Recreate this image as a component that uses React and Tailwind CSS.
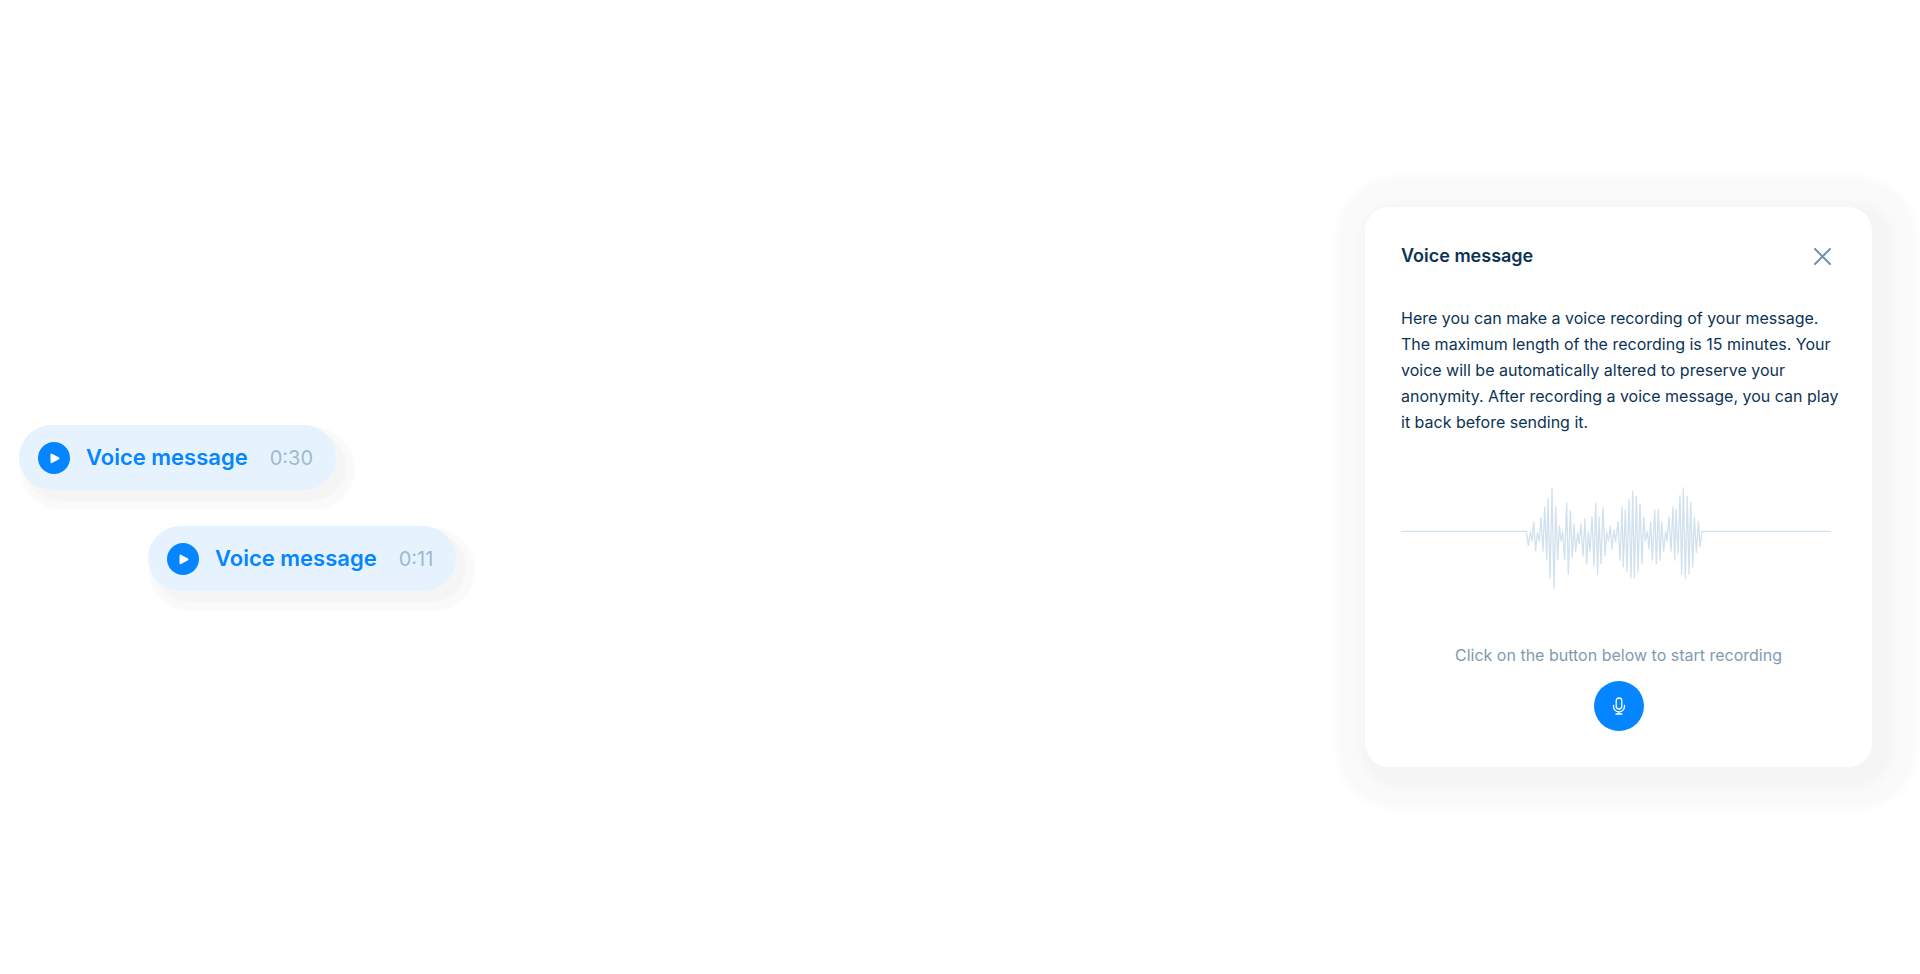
import React from 'react';

const messages = [
  { id: 1, length: '0:30', className: 'ml-[19px]' },
  { id: 2, length: '0:11', className: 'ml-[148px]' },
];

const peaks = [
  [49, 184], [55, 226], [61, 186], [66, 213], [71, 156], [77, 243], [82, 187], [88, 213], [93, 142], [99, 243],
  [104, 112], [110, 270], [114, 86], [120, 326], [126, 55], [132, 355], [137, 111], [143, 270], [148, 168], [153, 213],
  [158, 186], [164, 268], [170, 99], [175, 313], [181, 123], [187, 262], [192, 163], [197, 245], [203, 188], [207, 222],
  [213, 163], [219, 258], [225, 146], [230, 281], [235, 186], [240, 243], [246, 141], [252, 287], [257, 99], [263, 313],
  [267, 141], [273, 280], [279, 114], [285, 257], [290, 186], [295, 213], [301, 168], [306, 237], [312, 180], [317, 215],
  [324, 155], [330, 270], [336, 110], [340, 290], [346, 120], [351, 305], [357, 88], [363, 323], [368, 64], [373, 323],
  [379, 80], [384, 306], [390, 102], [396, 280], [401, 141], [406, 213], [412, 184], [417, 237], [422, 155], [427, 270],
  [434, 120], [439, 281], [445, 118], [450, 270], [455, 155], [461, 243], [467, 184], [471, 213], [477, 141], [483, 243],
  [489, 111], [494, 270], [498, 118], [504, 250], [510, 77], [515, 313], [520, 54], [526, 326], [532, 80], [537, 312],
  [542, 97], [548, 291], [553, 141], [559, 247], [565, 154], [570, 231], [576, 184],
];

function Waveform() {
  const points = peaks.map(([x, y]) => `${x + 327},${y}`).join(' ');

  return (
    <svg viewBox="0 0 1290 390" className="block w-full" fill="none" stroke="#d2e1ee" strokeWidth="4" strokeLinejoin="round" aria-hidden="true">
      <polyline points={`0,184 ${points} 1290,184`} />
    </svg>
  );
}

function VoicePill({ length, className }) {
  return (
    <button type="button" className={`flex h-[65px] w-fit items-center rounded-full bg-[#e6f3ff] pr-[23px] pl-[19px] shadow-[8px_9px_2px_2px_#f5f5f5,10px_11px_3px_9px_#fafafa] ${className}`}>
      <span className="flex size-8 items-center justify-center rounded-full bg-[#0585ff]">
        <svg viewBox="0 0 32 32" className="size-8" fill="#fff" stroke="#fff" strokeWidth="2" strokeLinejoin="round" aria-hidden="true">
          <path d="M13.5 12.6v7.6l7-3.8z" />
        </svg>
      </span>
      <span className="ml-4 text-[22px] font-semibold text-[#0585ff]">Voice message</span>
      <span className="ml-[22px] text-xl text-[#9fb9ce]">{length}</span>
    </button>
  );
}

export default function App() {
  return (
    <main className="flex min-h-screen items-center justify-between overflow-hidden bg-white font-['Inter',sans-serif]">
      <div className="flex flex-col gap-9 pt-[42px]">
        {messages.map((message) => (
          <VoicePill key={message.id} length={message.length} className={message.className} />
        ))}
      </div>

      <section className="mr-12 w-[507px] rounded-3xl bg-white px-9 pt-[35px] pb-9 shadow-[8px_8px_6px_12px_#f5f5f5,8px_6px_8px_36px_#fafafa]">
        <div className="mr-[5px] flex items-center justify-between">
          <h2 className="text-lg font-semibold text-[#0c3354]">Voice message</h2>
          <button type="button" aria-label="Close" className="text-[#7391ab]">
            <svg viewBox="0 0 17 17" className="size-[17px]" fill="none" stroke="currentColor" strokeWidth="2" strokeLinecap="round" aria-hidden="true">
              <path d="M1 1l15 15M16 1L1 16" />
            </svg>
          </button>
        </div>

        <p className="mt-[35px] -mr-2 text-base leading-[26px] text-[#0c3354]">
          Here you can make a voice recording of your message. The maximum length of the recording is 15 minutes. Your voice will be automatically altered to preserve your anonymity. After recording a voice message, you can play it back before sending it.
        </p>

        <div className="mt-[35px] mr-[5px]">
          <Waveform />
        </div>

        <div className="mt-[43px] flex flex-col items-center gap-3.5">
          <p className="text-base text-[#7f9bb3]">Click on the button below to start recording</p>
          <button type="button" aria-label="Start recording" className="flex size-[50px] items-center justify-center rounded-full bg-[#0585ff]">
            <svg viewBox="0 0 14 18" className="h-[18px] w-3.5" fill="none" stroke="#fff" strokeWidth="1.3" strokeLinecap="round" aria-hidden="true">
              <rect x="4.2" y="1" width="5.6" height="11" rx="2.8" />
              <path d="M1.5 8.5v1a5.5 5.5 0 0 0 11 0v-1M7 15v2M4 17h6" />
            </svg>
          </button>
        </div>
      </section>
    </main>
  );
}
